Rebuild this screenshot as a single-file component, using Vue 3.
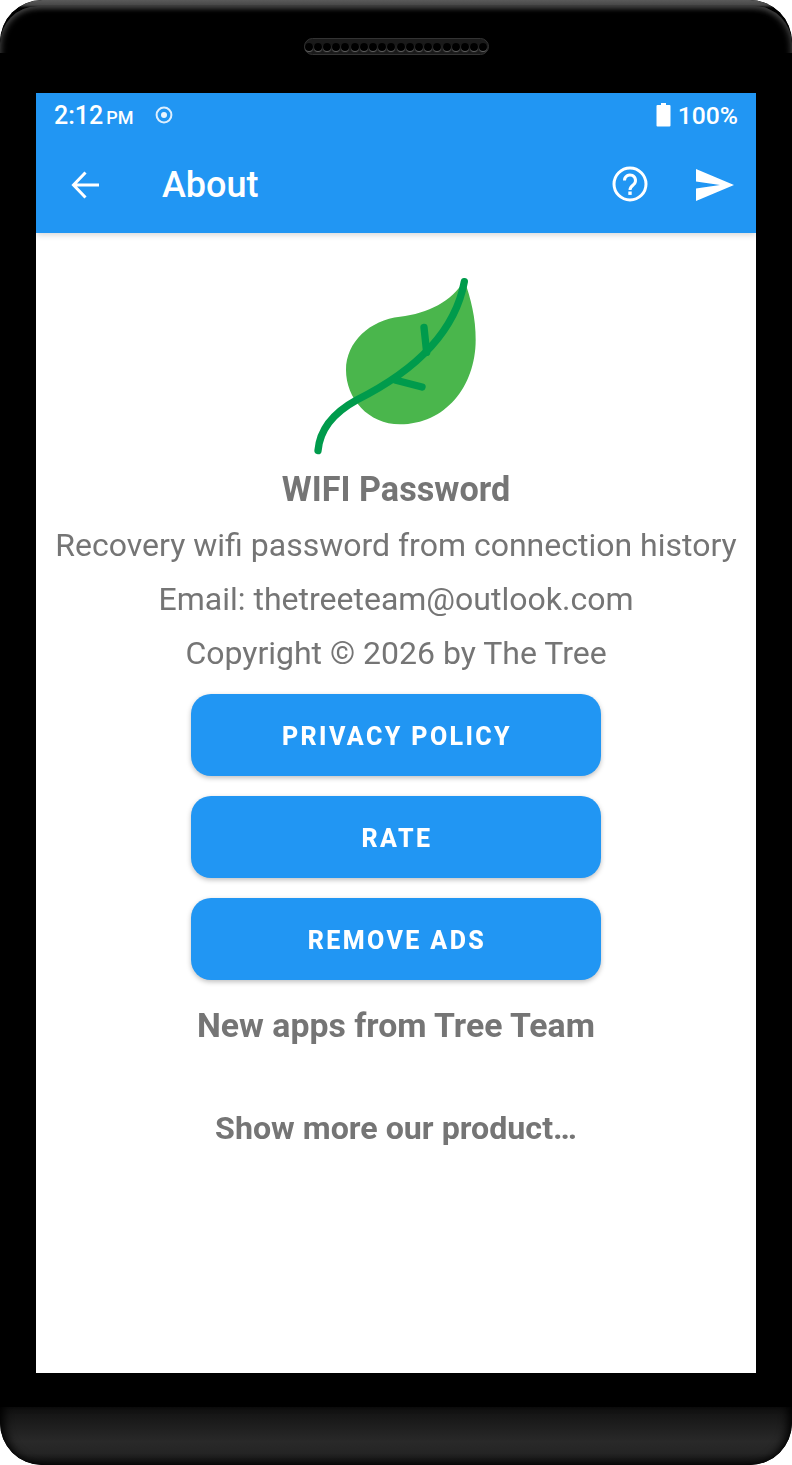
<template>
  <div class="phone">
    <div class="top-bezel">
      <div class="speaker">
        <span v-for="n in 20" :key="n" class="hole"></span>
      </div>
    </div>

    <div class="screen">
      <header class="header">
        <div class="status-bar">
          <div class="status-left">
            <span class="clock">2:12</span>
            <span class="ampm">PM</span>
            <svg class="record" width="18" height="18" viewBox="0 0 18 18">
              <circle cx="9" cy="9" r="7.4" fill="none" stroke="#fff" stroke-width="2" opacity="0.85" />
              <circle cx="9" cy="9" r="3" fill="#fff" opacity="0.9" />
            </svg>
          </div>
          <div class="status-right">
            <svg width="15" height="24" viewBox="0 0 15 24">
              <path d="M5 0h5v2h3.500a1 1 0 0 1 1 1v19.500a1 1 0 0 1-1 1h-12a1 1 0 0 1-1-1V3a1 1 0 0 1 1-1H5z" fill="#fff" />
            </svg>
            <span class="battery">100%</span>
          </div>
        </div>
        <div class="toolbar">
          <svg class="back" width="30" height="30" viewBox="0 0 30 30">
            <path d="M28 15H3M14.500 2.500L2.500 15l12 12.500" fill="none" stroke="#fff" stroke-width="3" />
          </svg>
          <h1 class="title">About</h1>
          <svg class="help" width="36" height="36" viewBox="0 0 36 36">
            <circle cx="18" cy="18" r="16" fill="none" stroke="#fff" stroke-width="3" />
            <path d="M12.500 14.500a5.500 5.500 0 1 1 9 4.200c-2 1.600-3.500 2.600-3.500 5.300" fill="none" stroke="#fff" stroke-width="3" />
            <rect x="16.300" y="25.500" width="3.400" height="3.400" fill="#fff" />
          </svg>
          <svg class="send" width="38" height="32" viewBox="0 0 38 32">
            <path d="M0 0L38 16 0 32V19.500L24 16 0 12.500z" fill="#fff" />
          </svg>
        </div>
      </header>

      <main class="content">
        <svg class="leaf" width="190" height="200" viewBox="0 0 570 600">
          <path d="M493 45C512 100 528 160 527 225C527 365 435 478 300 478C205 478 138 400 138 315C138 230 210 165 300 155C385 145 455 110 493 45Z" fill="#4ab64c" />
          <g fill="none" stroke="#009b4c" stroke-width="22" stroke-linecap="round" stroke-linejoin="round">
            <path d="M54 557C60 485 110 438 170 405C300 340 460 230 493 50" />
            <path d="M372 187L380 262" />
            <path d="M285 345L366 366" />
          </g>
        </svg>
        <h2 class="app-name">WIFI Password</h2>
        <p class="line">Recovery wifi password from connection history</p>
        <p class="line">Email: thetreeteam@outlook.com</p>
        <p class="line">Copyright © 2026 by The Tree</p>

        <div class="actions">
          <button v-for="label in buttons" :key="label" class="action">{{ label }}</button>
        </div>

        <h3 class="new-apps">New apps from Tree Team</h3>
        <p class="more">Show more our product…</p>
      </main>
    </div>

    <div class="bottom-bezel"></div>
  </div>
</template>

<script setup>
const buttons = ['PRIVACY POLICY', 'RATE', 'REMOVE ADS'];
</script>

<style>
html, body {
  margin: 0;
  background: #fff;
}
</style>

<style scoped>
.phone {
  position: relative;
  width: 792px;
  height: 1465px;
  background: #000;
  border-radius: 42px;
  overflow: hidden;
  font-family: Roboto, "Liberation Sans", sans-serif;
}

.top-bezel {
  height: 93px;
  box-sizing: border-box;
  padding-top: 38px;
  display: flex;
  justify-content: center;
  background: linear-gradient(#5a5a5a, #484848 5px, #000 8px);
  border-radius: 42px 42px 0 0;
  position: relative;
}

.top-bezel::before {
  content: "";
  position: absolute;
  inset: 6px 0 0;
  background: #000;
  border-radius: 38px 38px 0 0;
  box-shadow: inset 3px 3px 6px -2px #444, inset -3px 3px 6px -2px #444;
  clip-path: inset(0 0 40px 0);
}

.speaker {
  position: relative;
  width: 185px;
  height: 17px;
  box-sizing: border-box;
  border: 1.500px solid #333;
  border-radius: 9px;
  background: #1a1a1a;
  display: flex;
  align-items: center;
  justify-content: center;
  gap: 1.200px;
}

.hole {
  width: 8px;
  height: 8px;
  border-radius: 50%;
  background: #000;
  box-shadow: 0 1px 1px #666;
}

.screen {
  margin: 0 36px;
  height: 1280px;
  background: #fff;
}

.header {
  height: 140px;
  background: #2196f3;
  color: #fff;
  box-shadow: 0 2px 6px rgba(0, 0, 0, 0.16);
  position: relative;
}

.status-bar {
  height: 44px;
  display: flex;
  align-items: center;
  justify-content: space-between;
  padding: 0 18px;
}

.status-left,
.status-right {
  display: flex;
  align-items: baseline;
}

.status-right {
  align-items: center;
  gap: 7px;
}

.clock {
  font-size: 25px;
  font-weight: 500;
}

.ampm {
  font-size: 18px;
  font-weight: 500;
  margin-left: 3px;
}

.record {
  margin-left: 22px;
  align-self: center;
}

.battery {
  font-size: 24.700px;
  font-weight: 500;
}

.toolbar {
  height: 96px;
  display: flex;
  align-items: center;
  padding: 0 22px 0 35px;
}

.title {
  margin: 0 0 0 61px;
  font-size: 36px;
  font-weight: 500;
  flex: 1;
}

.help {
  margin-right: 48px;
  margin-bottom: 2px;
}

.content {
  display: flex;
  flex-direction: column;
  align-items: center;
  color: #757575;
  padding-top: 32px;
  will-change: transform;
}

.leaf {
  display: block;
  margin-right: 2px;
}

.app-name {
  margin: 0;
  font-size: 34.200px;
  font-weight: 700;
  line-height: 48px;
}

.line {
  margin: 0;
  font-size: 32px;
  line-height: 54px;
  white-space: nowrap;
}

.line:first-of-type {
  margin-top: 5px;
}

.actions {
  display: flex;
  flex-direction: column;
  gap: 20px;
  margin-top: 14px;
}

.action {
  width: 410px;
  height: 82px;
  border: 0;
  border-radius: 20px;
  background: #2196f3;
  color: #fff;
  font-family: inherit;
  font-size: 25px;
  font-weight: 800;
  letter-spacing: 2.400px;
  padding: 2px 0 0 2px;
  box-shadow: 0 2px 5px rgba(0, 0, 0, 0.25);
}

.new-apps {
  margin: 21px 0 0;
  font-size: 33.800px;
  font-weight: 700;
  line-height: 50px;
}

.more {
  margin: 52px 0 0;
  font-size: 32.200px;
  font-weight: 700;
  line-height: 50px;
}

.bottom-bezel {
  position: absolute;
  left: 0;
  right: 0;
  bottom: 0;
  height: 58px;
  background: linear-gradient(#111, #292929 60%, #242424 80%, #0c0c0c);
  border-radius: 0 0 42px 42px;
  box-shadow: inset 8px 0 10px -4px #000, inset -8px 0 10px -4px #000;
}
</style>
